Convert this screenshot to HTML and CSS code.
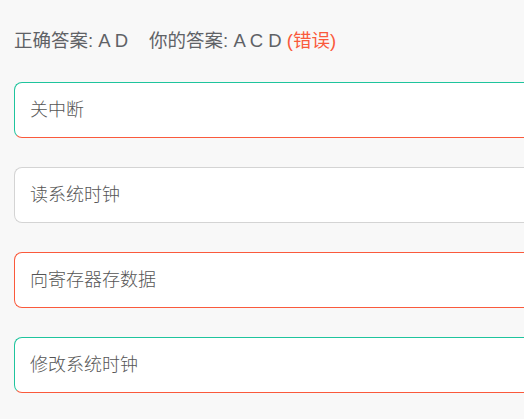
FILE: index.html
```html
<!DOCTYPE html>
<html lang="zh">
<head>
<meta charset="utf-8">
<link rel="stylesheet" href="styles.css">
</head>
<body>
<div class="page">
  <div class="answer">
    <span>正确答案: A D</span>
    <span class="mine">你的答案: A C D <span class="wrong">(错误)</span></span>
  </div>
  <div class="options">
    <div class="option correct">关中断</div>
    <div class="option">读系统时钟</div>
    <div class="option error">向寄存器存数据</div>
    <div class="option correct">修改系统时钟</div>
  </div>
</div>
</body>
</html>
```
FILE: styles.css
```css
html, body {
  margin: 0;
  padding: 0;
  background: #f8f8f8;
  overflow: hidden;
}
.page {
  padding: 29px 0 0 14px;
  width: 500px;
  font-family: "Liberation Sans", Arial, "Noto Sans CJK SC", sans-serif;
}
.answer {
  font-size: 18.5px;
  line-height: 24px;
  color: #5f6266;
  display: flex;
  gap: 21px;
  white-space: nowrap;
}
.wrong {
  color: #fa5a3c;
}
.options {
  margin-top: 29px;
  display: flex;
  flex-direction: column;
  gap: 28px;
}
.option {
  width: 520px;
  box-sizing: border-box;
  height: 56px;
  padding: 0 15px 5px;
  display: flex;
  align-items: center;
  background: #fff;
  border: 1px solid #d4d4d4;
  border-right: none;
  border-radius: 8px 0 0 8px;
  font-family: "Noto Sans CJK SC", sans-serif;
  font-weight: 300;
  font-size: 18px;
  color: #555;
}
.option + .option {
  margin-top: 1px;
}
.option.correct {
  border-color: #1fc49d;
  border-bottom-color: #fa5a3c;
}
.option.error {
  border-color: #fa5a3c;
}
```
